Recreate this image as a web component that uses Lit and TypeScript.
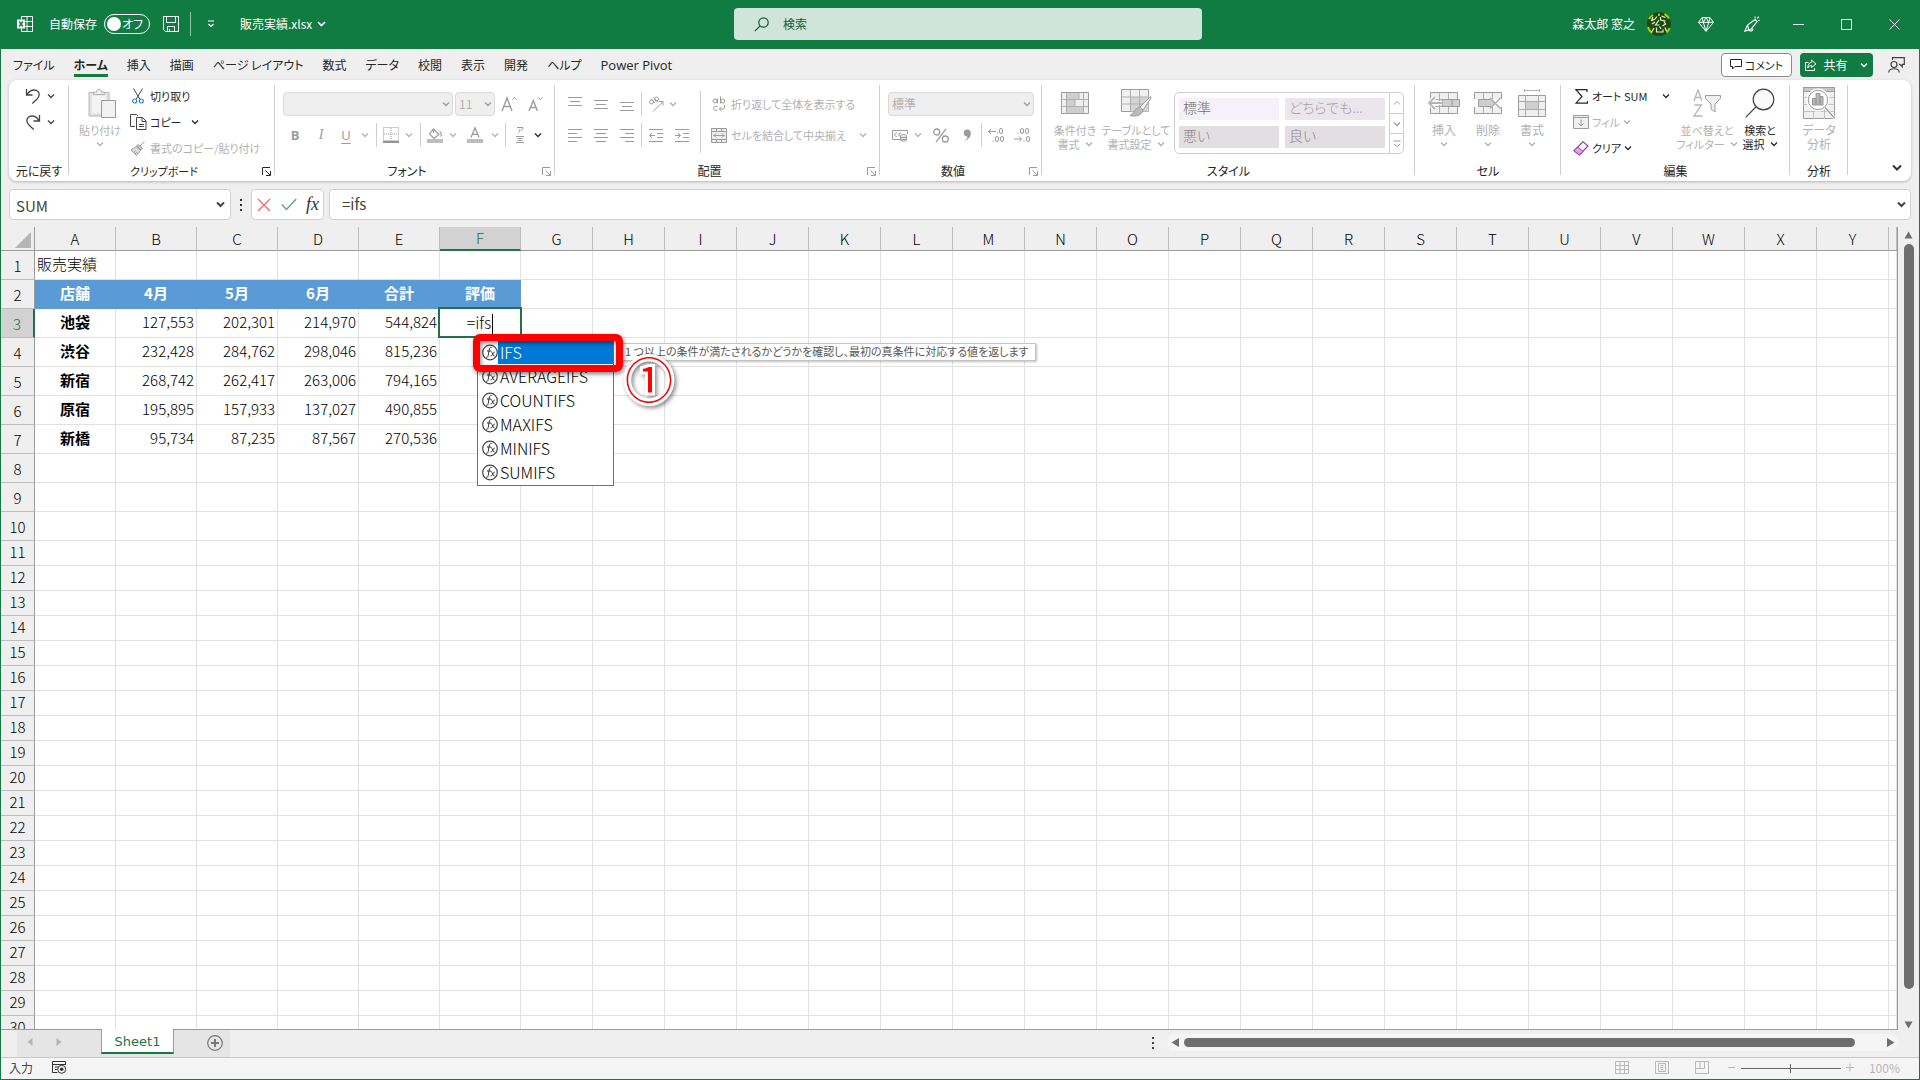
import { LitElement, html, css, svg, nothing } from "lit";
import { customElement } from "lit/decorators.js";
import { classMap } from "lit/directives/class-map.js";

const icon = (w: number, h: number, body: unknown, cls = "") => html`<svg
  class="ico ${cls}" width=${w} height=${h} viewBox="0 0 ${w} ${h}" fill="none" stroke="currentColor"
  aria-hidden="true">${body}</svg>`;

const chev = (cls = "") => icon(8, 6, svg`<path d="M1 1.5 4 4.5 7 1.5" stroke-width="1.3"/>`, "chev " + cls);
const bigChev = () => icon(10, 7, svg`<path d="M1 1.5 5 5.5 9 1.5" stroke-width="2"/>`);

const hlines = (rows: [number, number, number][]) =>
  icon(14, 14, rows.map(([x, y, w]) => svg`<path d="M${x} ${y}.5h${w}" />`));

/* ---- title bar ---- */
const excelIcon = icon(16, 16, svg`
  <path d="M4.500 3.500v-3h11v15h-11v-3M10 .5v15M4.500 5.500h11M4.500 10.500h11"/>
  <path d="M0 3.500h8v9H0z" fill="#fff" stroke="none"/><path d="M2.200 5.500l3.600 5M5.800 5.500l-3.600 5" stroke="#107c41" stroke-width="1.400"/>`);
const saveIcon = icon(16, 16, svg`<path d="M.5.5h15v15h-13l-2-2zM3.500.5v6h9v-6M4.500 15.500v-5h7v5M6.500 13v2.500"/>`);
const searchIcon = icon(15, 15, svg`<circle cx="9.500" cy="5.500" r="4.700" stroke-width="1.200"/><path d="M6.200 8.800.8 14.200" stroke-width="1.200"/>`);
const diamondIcon = icon(16, 15, svg`<path d="M4 .7h8l3.500 4.600L8 14.300.5 5.300zM.5 5.300h15M4 .7l1.300 4.600L8 14.300l2.700-9L12 .7M5.300 5.300 8 .7l2.700 4.600"/>`);
const penIcon = icon(16, 16, svg`<path d="M11 3.500 3.500 9 .8 15.200 7 13.200 13.200 5.600zM3.500 9l1.300 5M4 14.300c3 1.500 5 .5 5-1.500M11.300 2.300 11 .5M13.300 2.500 14.800.6M14 4.500l1.800-.3" stroke-width="1.100"/>`);
const avatarIcon = icon(24, 24, svg`
  <circle cx="12" cy="12" r="12" fill="#1d4a14" stroke="none"/>
  <path d="M2 7a11.500 11.500 0 0 1 4-4M17.500 2a11.500 11.500 0 0 1 4.500 4.500M1 15a11.500 11.500 0 0 0 4 6M19.500 20.500a11.500 11.500 0 0 0 3-4.500" stroke="#a4d20c" stroke-width="2"/>
  <path d="M12 1.500v2.500M4.500 8.500l1.500-3.500M10 4.500 8 7 4 9M13.500 5v3l5 1M12 8 8.500 13h4M14.500 4l4 1.500M16 8l2.500 4-3 2M7 16l-2.500 4M9.500 15.500v4.500h6.500v-2.500M12.500 14.500l1.500 2.500M18 15.500l1.500 3.500M5 12l3-2" stroke="#e4f5c4" stroke-width="1.200"/>`);

/* ---- ribbon ---- */
const undoIcon = icon(16, 16, svg`<path d="M1.500 1v6h6M1.800 6.700C4 3.500 6.500 2 9 2c3.500 0 5.200 2.300 5.200 4.600 0 2-1 3.200-2.400 4.600L7.300 15.500" stroke-width="1.300"/>`);
const redoIcon = icon(16, 16, svg`<path d="M14.500 1v6h-6M14.200 6.700C12 3.500 9.500 2 7 2 3.500 2 1.800 4.300 1.800 6.600c0 2 1 3.200 2.400 4.600l4.500 4.300" stroke-width="1.300"/>`);
const pasteIcon = icon(32, 31, svg`<g transform="translate(4 0)">
  <path d="M1 4.500h20V28H1z" fill="#e3e3e3" stroke="#b5b5b5"/><path d="M4 7.500h14V25H4z" fill="#f4f4f4" stroke="none"/>
  <path d="M5.500 6.500V4.200h3c.3-4 4.700-4 5 0h3v2.300z" fill="#f0f0f0" stroke="#b0b0b0"/>
  <path d="M13.500 12.500h14v17h-14z" fill="#f2f2f2" stroke="#9a9a9a"/></g>`);
const cutIcon = icon(12, 16, svg`<path d="M1.500.5 8 11.500M10.500.5 4 11.500" stroke="#444"/><circle cx="2.700" cy="13" r="2" stroke="#2b88d8" stroke-width="1.200"/><circle cx="9.300" cy="13" r="2" stroke="#2b88d8" stroke-width="1.200"/>`);
const copyIcon = icon(17, 16, svg`<path d="M5 12.500H.5V.5h6l1.500 1.500M6.500 3.500h6l3.500 3.500v8.500H6.500zM12 3.700v3.800h4M9 10.500h5M9 12.500h5" stroke="#444"/>`);
const painterIcon = icon(16, 15, svg`<path d="M14.500.7 9.500 5.500M8 3.500l4.500 4L11 9 6.500 5z" fill="#c9c9c9"/><path d="M6 5.500 1 9l5.500 5.500L10.500 9.500zM3.500 11.500l2-1.500M5 13l2-2" fill="#dedede"/>`);
const launcher = (cls = "") => icon(9, 9, svg`<path d="M.5 8V.5H8M3.500 3.500l4.500 4.500M8.500 4v4.500H4"/>`, cls);
const growIcon = icon(16, 16, svg`<path d="M1 15 6 2l5 13M2.800 10.500h6.400" stroke-width="1.400"/><path d="M11.500 3.500 13.500 1.500l2 2"/>`);
const shrinkIcon = icon(16, 16, svg`<path d="M1 15 5.300 4.500 9.500 15M2.500 11.500h5.600" stroke-width="1.400"/><path d="M10.500 1.500l2 2 2-2"/>`);
const borderIcon = icon(16, 16, svg`<path d="M.5.5h15v13H.5zM8 1v12M1 7h14" stroke-dasharray="1 1"/><path d="M0 15h16" stroke="#666" stroke-width="1.400"/>`);
const fillColorIcon = icon(16, 16, svg`<path d="M6.500 2 12 7.500 7 11.500 2.500 7zM6.500 2v4M12.500 4.500c1.500.5 2 2 1.500 5" stroke-width="1.200"/><path d="M0 12h16v4H0z" fill="#bdbdbd" stroke="none"/>`);
const fontColorIcon = icon(16, 16, svg`<path d="M4 10.500 8 .8l4 9.700M5.300 7.300h5.400" stroke-width="1.300"/><path d="M0 12h16v4H0z" fill="#bdbdbd" stroke="none"/>`);
const rubyIcon = icon(8, 16, svg`<path d="M1 .5h6c0 1.700-.7 2.300-2 2.800M3.800 2c0 2-.3 3-1.500 3.800M0 9.500h8M1.500 11.500h5M1.500 13.500h5M0 15.500h8"/>`);
const orientIcon = icon(16, 16, svg`<circle cx="3.500" cy="6" r="2"/><path d="M3 2.500 7 7M5.500 1.500l4 4.500"/><circle cx="8.500" cy="3" r="2"/><path d="M5 15.500 14.500 6M11 5.500h4v4"/>`);
const wrapIcon = icon(14, 16, svg`<circle cx="3" cy="5" r="2"/><path d="M5.500 2.500v5M8.500.5v7"/><circle cx="10.800" cy="5" r="2"/><path d="M5.500 10.800c-2-1.300-4-.3-4 1.500s2 2.700 4 1.500M12.500 9v2.500c0 1-.5 1.500-1.500 1.500H7.500M9.500 10.800 7.300 13l2.200 2.200"/>`);
const mergeIcon = icon(16, 15, svg`<path d="M.5.5h15v14H.5zM.5 3.500h15M.5 11.500h15M5.500.5v3M10.500.5v3M5.500 11.500v3M10.500 11.500v3" fill="#ededed"/><path d="M2.500 7.500h11M5 5.500l-2 2 2 2M11 5.500l2 2-2 2"/>`);
const moneyIcon = icon(16, 13, svg`<path d="M8 10.500H.5v-9h15V5M5 4c-3-1-3 4 0 3.500M7 7.500V4.500l2-.5"/><path d="M8.500 6.500c0-1.300 6-1.300 6 0v4.500c0 1.500-6 1.500-6 0zM8.500 8.500h6M8.500 10.500h6" fill="#e6e6e6"/>`);
const percentIcon = icon(16, 15, svg`<circle cx="3.700" cy="4" r="3" stroke-width="1.300"/><circle cx="12.300" cy="11" r="3" stroke-width="1.300"/><path d="M13 .8 3 14.200" stroke-width="1.300"/>`);
const commaIcon = icon(9, 13, svg`<path d="M4.300.5c5.500 0 4.700 9-2.800 12 2-2 3-3.500 2.800-5C-.5 7.500-.5.5 4.300.5z" fill="currentColor" stroke="none"/>`);
const zeros = (xs: [number, number][]) => xs.map(([x, y]) => svg`<rect x=${x} y=${y} width="3" height="5" rx="1.500"/>`);
const dots = (xs: [number, number][]) => xs.map(([x, y]) => svg`<path d="M${x} ${y}h1.200" stroke-width="1.200"/>`);
const incDecIcon = icon(16, 16, [svg`<path d="M.5 4.500h7.500M3 2 .5 4.500 3 7"/>`, zeros([[11.5, 1.5], [7.5, 9.5], [12.5, 9.5]]), dots([[9, 6], [4.5, 14]])]);
const decDecIcon = icon(16, 16, [svg`<path d="M0 12h7.500M5 9.500 7.500 12 5 14.500"/>`, zeros([[6.5, 1.5], [11.5, 1.5], [12.500, 9.5]]), dots([[3.5, 6], [9.5, 14]])]);
const condIcon = icon(28, 22, svg`<path d="M.5.5h27v21H.5z" fill="#f0f0f0"/><path d="M6 1h12v6.500H6zM6 7.500h8v7H6zM6 14.500h17V21H6z" fill="#cfcfcf" stroke="none"/><path d="M.5 7.500h27M.5 14.500h27M5.500.5v21M22.500.5v21M18 .5v7M14 7.500v7" stroke="#b0b0b0"/>`);
const tableFmtIcon = icon(32, 28, svg`<path d="M1.500.5h27v22h-27z" fill="#f0f0f0"/><path d="M10.500 8h18v14.500h-18z" fill="#d4d4d4" stroke="none"/><path d="M1.500 8h27M1.500 15h27M10.500.5v22M19.500.5v22" stroke="#b0b0b0"/>
  <path d="M30.500 7.500 20 18l3 3L31 9z" fill="#f4f4f4"/><path d="M20 18c-4 0-5 5-10 8.500 6 1.500 12 0 13-5.500z" fill="#bcbcbc"/>`);
const cellGrid = svg`<path d="M2.500.5h27v21h-27z" fill="#f0f0f0"/><path d="M2.500 7.500h27M2.500 14.500h27M11.500.5v21M20.500.5v21" stroke="#b0b0b0"/>`;
const insertIcon = icon(32, 22, [cellGrid, svg`<path d="M14 7.500h17.500v7H14zM24 7.500v7" fill="#cfcfcf"/><path d="M1 11h13M7 5l-6 6 6 6" stroke="#fff" stroke-width="4"/><path d="M1 11h14M7 5l-6 6 6 6" stroke="#b5b5b5" stroke-width="1.800"/>`]);
const deleteIcon = icon(32, 22, [cellGrid, svg`<path d="M0 7h32v8H0z" fill="#fff" stroke="none"/><path d="M6.500 7.500h13l3.500 3.500-3.500 3.500h-13z" fill="#cfcfcf"/><path d="m18 6 10.500 10.500M28.500 6 18 16.500" stroke="#b0b0b0" stroke-width="1.500"/>`]);
const formatIcon = icon(28, 28, svg`<path d="M6.500 1.500h15M6.500 0v3M21.500 0v3" stroke="#b0b0b0"/><path d="M.5 6.500h27v21H.5z" fill="#f0f0f0"/><path d="M.5 12.500h27M.5 20.500h27M7.500 6.500v21M20.500 6.500v21" stroke="#aaa"/><path d="M8 13h12v7H8z" fill="#cfcfcf" stroke="none"/>`);
const sigmaIcon = icon(13, 15, svg`<path d="M12 3V.7H1L7 7.500 1 14.200h11.500V12" stroke-width="1.200"/>`);
const fillIcon = icon(16, 14, svg`<path d="M.5.5h15v13H.500z" fill="#f0f0f0"/><path d="M.5 2.500h15M8 4.500v6M5.500 8.500 8 11l2.500-2.500"/>`);
const eraserIcon = icon(16, 15, svg`<path d="M10 .8 15 5 6.500 14 1 9.800z" stroke="#9b3fa8" fill="#fff" stroke-width="1.200"/><path d="M4.800 6 10 10.300 6.500 14 1 9.800z" fill="#d9a8e0" stroke="#9b3fa8"/>`);
const sortIcon = icon(28, 28, svg`<path d="M1 12 5 1l4 11M2.500 8.500h5M1.500 16h7L1 27h8.500" stroke="#b5b5b5" stroke-width="1.300"/><path d="M12.500 6.500h15v3L22 15v8l-4-3v-5l-5.500-5.500z" fill="#f0f0f0"/>`);
const findIcon = icon(30, 30, svg`<circle cx="18.500" cy="11.500" r="10.300" fill="#fafafa" stroke-width="1.200"/><path d="M10.800 19 .7 29.300" stroke-width="1.200"/>`);
const analyzeIcon = icon(32, 32, svg`<path d="M.5.5h31v31H.5z" fill="#f0f0f0"/><path d="M.5.500h31v4H.5z" fill="#c6c6c6"/><path d="M.5 10.500h31M.5 17.500h31M.5 24.500h31M10.500 4v28M21.500 4v28" stroke="#c0c0c0"/>
  <circle cx="15" cy="13" r="10.500" fill="#fff" stroke="#fff" stroke-width="2"/><circle cx="15" cy="13" r="9.700" fill="#fff" stroke="#999"/><path d="M22 20.500 31.500 31" stroke="#fff" stroke-width="3"/><path d="M22 20.500 31.500 31" stroke="#999" stroke-width="1.300"/>
  <path d="M9.500 11.500h3.500V18H9.500zM13 6.500h4V18h-4zM17 9.500h3V18h-3z" fill="#b5b5b5" stroke="#999"/>`);

const commentIcon = icon(12, 11, svg`<path d="M.5.5h11v7H5L2.500 10V7.500h-2z"/>`);
const shareIcon = icon(12, 12, svg`<path d="M3.500 3.500h-3v8h9V9M6.500 1l4.500 4-4.500 3.500V6.500C4.500 6.500 3.500 7.500 2.800 9c0-3 1.200-5.500 3.700-5.700z"/>`);
const feedbackIcon = icon(17, 16, svg`<circle cx="6" cy="7.500" r="3" stroke-width="1.200"/><path d="M.7 15.500c.3-5 10.300-5 10.600 0M4.500 3V.6h11.800v6.800h-2v2.300l-2.300-2.300h-1" stroke-width="1.200"/>`);

const tabs = ["ファイル", "ホーム", "挿入", "描画", "ページ レイアウト", "数式", "データ", "校閲", "表示", "開発", "ヘルプ", "Power Pivot"];

const letters = "ABCDEFGHIJKLMNOPQRSTUVWXY".split("");
const sheet: string[][] = [
  ["販売実績"],
  ["店舗", "4月", "5月", "6月", "合計", "評価"],
  ["池袋", "127,553", "202,301", "214,970", "544,824"],
  ["渋谷", "232,428", "284,762", "298,046", "815,236"],
  ["新宿", "268,742", "262,417", "263,006", "794,165"],
  ["原宿", "195,895", "157,933", "137,027", "490,855"],
  ["新橋", "95,734", "87,235", "87,567", "270,536"],
];
const functions = ["IFS", "AVERAGEIFS", "COUNTIFS", "MAXIFS", "MINIFS", "SUMIFS"];

const base = css`
  *, *::before, *::after { box-sizing: border-box; }
  button, input, select {
    font: inherit; color: inherit; background: none; border: 0; padding: 0; margin: 0;
    font-feature-settings: inherit; border-radius: 0; outline: none;
  }
  button { display: flex; align-items: center; justify-content: center; white-space: nowrap; }
  .ico { display: block; flex: none; }
`;

@customElement("title-bar")
export class TitleBar extends LitElement {
  static styles = [base, css`
    :host { display: block; background: #107c41; color: #fff; }
    .bar { height: 49px; display: grid; grid-template-columns: 1fr 468px 1fr; align-items: center; padding: 0 0 1px 16px; }
    .left, .right { display: flex; align-items: center; white-space: nowrap; }
    .label { margin: 0 7px 0 16px; }
    .switch { width: 46px; height: 20px; border: 1px solid #fff; border-radius: 10px; justify-content: space-between; padding: 0 6px 0 2px; margin-right: 13px; }
    .knob { width: 14px; height: 14px; border-radius: 50%; background: #fff; }
    .rule { width: 1px; height: 24px; background: #8fc3a7; margin: 0 16px 0 11px; }
    .file { margin-left: 25px; gap: 5px; }
    .search { display: flex; align-items: center; gap: 14px; height: 32px; padding-left: 20px; border-radius: 4px; background: #cfe5d9; color: #17593a; }
    .search input { flex: 1; }
    .search input::placeholder { color: #17593a; opacity: 1; }
    .right { justify-content: flex-end; padding-right: 19px; }
    .user { margin-right: 27px; gap: 12px; }
    .gem { margin-right: 30px; }
    .pen { margin-right: 33px; }
    .win { width: 11px; }
    .wins { display: flex; gap: 37px; }
  `];
  render() {
    return html`<header class="bar">
      <div class="left">
        ${excelIcon}<span class="label">自動保存</span>
        <button class="switch" role="switch" aria-checked="false" aria-label="自動保存"><span class="knob"></span>オフ</button>
        <button aria-label="上書き保存">${saveIcon}</button>
        <span class="rule"></span>
        <button aria-label="クイック アクセス">${icon(8, 8, svg`<path d="M1 1h6M1.500 4 4 6.500 6.500 4" stroke-width="1.200"/>`)}</button>
        <button class="file">販売実績.xlsx ${icon(9, 6, svg`<path d="M1 1 4.500 4.500 8 1" stroke-width="1.600"/>`)}</button>
      </div>
      <label class="search">${searchIcon}<input type="search" placeholder="検索" aria-label="検索" /></label>
      <div class="right">
        <button class="user">森太郎 窓之 ${avatarIcon}</button>
        <button class="gem" aria-label="Premium">${diamondIcon}</button>
        <button class="pen" aria-label="新機能">${penIcon}</button>
        <div class="wins">
          <button class="win" aria-label="最小化">${icon(11, 11, svg`<path d="M0 5.500h11"/>`)}</button>
          <button class="win" aria-label="最大化">${icon(11, 11, svg`<path d="M.5.5h10v10H.500z"/>`)}</button>
          <button class="win" aria-label="閉じる">${icon(11, 11, svg`<path d="m.5.5 10 10m0-10-10 10"/>`)}</button>
        </div>
      </div>
    </header>`;
  }
}

@customElement("menu-tabs")
export class MenuTabs extends LitElement {
  static styles = [base, css`
    :host { display: block; }
    .row { height: 31px; display: flex; align-items: center; padding: 0 14px 0 12px; color: #262626; }
    .tabs { display: flex; gap: 19px; flex: 1; }
    .tab { height: 25px; color: inherit; text-decoration: none; line-height: 26px; white-space: nowrap; border-bottom: 3px solid transparent; }
    .tab:lang(en) { font-family: "Open Sans", sans-serif; font-size: 13px; }
    .active { font-weight: 700; border-bottom-color: #107c41; }
    .actions { display: flex; align-items: center; gap: 8px; }
    .comment, .share { height: 24px; border-radius: 4px; }
    .comment { width: 71px; border: 1px solid #8a8a8a; background: #fff; gap: 3px; font-size: 11px; }
    .share { width: 73px; background: #107c41; color: #fff; gap: 6px; }
    .share .chev { margin-left: 6px; }
    .fb { margin-left: 7px; color: #444; }
  `];
  render() {
    return html`<div class="row">
      <nav class="tabs">${tabs.map((t) => html`<a href="#" lang=${/^[A-Z]/.test(t) ? "en" : "ja"} class=${classMap({ tab: true, active: t === "ホーム" })}>${t}</a>`)}</nav>
      <div class="actions">
        <button class="comment">${commentIcon}コメント</button>
        <button class="share">${shareIcon}共有${chev()}</button>
        <button class="fb" aria-label="フィードバック">${feedbackIcon}</button>
      </div>
    </div>`;
  }
}

@customElement("ribbon-bar")
export class RibbonBar extends LitElement {
  static styles = [base, css`
    :host { display: block; padding: 0 8px; }
    .ribbon { display: flex; height: 101px; background: #fff; border-radius: 8px; box-shadow: 0 1px 3px rgba(0, 0, 0, 0.25); color: #262626; font-size: 11px; }
    .group { display: flex; flex-direction: column; flex: none; background: linear-gradient(#cfcfcf, #cfcfcf) right 5px / 1px 90px no-repeat; }
    .g-undo { width: 60px; } .g-clip { width: 206px; } .g-font { width: 280px; } .g-align { width: 325px; }
    .g-num { width: 162px; } .g-style { width: 373px; } .g-cell { width: 146px; } .g-edit { width: 229px; } .g-ana { width: 58px; }
    .body { display: flex; height: 82px; }
    .foot { display: flex; align-items: center; height: 17px; text-align: center; white-space: nowrap; }
    .name { flex: 1; }
    .launch { width: 16px; justify-content: flex-start; padding-left: 3px; padding-top: 2px; }
    .off { color: #b1b1b1; }
    .off .ico { color: #9c9c9c; }
    .off .chev { color: #b1b1b1; }
    .list { display: grid; grid-auto-rows: 26px; padding-top: 3px; align-items: center; justify-items: start; }
    .g-undo .list { padding-left: 16px; }
    .g-undo button { gap: 6px; color: #444; }
    .g-clip .list { padding-left: 4px; }
    .item { gap: 3px; }
    .pic { width: 18px; display: grid; justify-content: center; }
    .item .chev { margin-left: 2px; }
    .item .far { margin-left: 6px; }
    .big { flex-direction: column; justify-content: flex-start; padding-top: 7px; line-height: 14px; flex: none; }
    .art { height: 32px; display: grid; place-items: center; margin-bottom: 4px; }
    .line { display: flex; align-items: center; gap: 5px; height: 14px; }
    .w50 { width: 50px; } .w72 { width: 72px; } .w44 { width: 44px; } .w58 { width: 58px; } .w60 { width: 60px; } .w46 { width: 46px; }
    .g-clip .body { padding-left: 6px; }
    .g-cell, .g-ana, .foot { font-size: 12px; }
    .g-clip .foot { font-size: 11px; }
    .rows { display: grid; grid-template-rows: 24px 24px; row-gap: 7px; padding-top: 12px; align-content: start; }
    .tools { display: grid; align-items: center; justify-items: center; }
    .rule { width: 1px; height: 24px; background: #cfcfcf; }
    .combo { display: grid; align-items: center; height: 24px; border: 1px solid #dadada; border-radius: 4px; background: #efefef; color: #b1b1b1; font-size: 12px; }
    .combo select { grid-area: 1 / 1; appearance: none; width: 100%; height: 22px; padding-left: 3px; opacity: 1; }
    .combo .chev { grid-area: 1 / 1; justify-self: end; margin-right: 2px; color: #9c9c9c; }
    .g-font .body { padding-left: 8px; }
    .f1 { grid-template-columns: 170px 2px 40px 28px 26px; }
    .f1 .combo { width: 100%; }
    .f2 { grid-template-columns: 24px 28px 22px 16px 6px 24px 12px 10px 20px 16px 28px 11px 10px 20px 16px; }
    .b { font-weight: 700; font-size: 13px; font-family: "Open Sans", sans-serif; }
    .i { font-style: italic; font-size: 14px; font-family: "Liberation Serif", serif; }
    .u { text-decoration: underline; text-underline-offset: 3px; font-size: 13px; font-family: "Open Sans", sans-serif; }
    .b, .i, .u { color: #9c9c9c; }
    .f2 .dark { color: #262626; }
    .g-align .body { padding-left: 7px; }
    .a { grid-template-columns: 26px 26px 26px 3px 26px 26px; }
    .a .start { justify-self: start; }
    .tall { width: 1px; height: 62px; background: #cfcfcf; margin: 11px 9px 0 5px; }
    .wrapcol { justify-items: start; }
    .wrapcol button { height: 24px; }
    .wrapcol .far { margin-left: 10px; }
    .g-num .body { padding-left: 8px; }
    .g-num .combo { width: 146px; }
    .n2 { grid-template-columns: 24px 12px 34px 18px 10px 20px 32px; }
    .g-style .body { padding-left: 8px; }
    .gallery { display: grid; grid-template-columns: 1fr 15px; width: 230px; height: 62px; margin: 12px 0 0 2px; border: 1px solid #cfcfcf; border-radius: 5px; overflow: hidden; }
    .tiles { display: grid; grid-template-columns: 100px 100px; grid-template-rows: 22px 22px; gap: 6px; padding: 5px 4px; }
    .tile { justify-content: flex-start; padding: 0 0 5px 4px; font-size: 14px; font-weight: 300; }
    .t0 { background: #f6f1f8; color: #6e6e6e; } .t1 { background: #ebe5ec; color: #a5a0a5; }
    .t2 { background: #e3dee2; color: #8a8488; } .t3 { background: #e3dee2; color: #8a8488; }
    .spin { display: grid; grid-template-rows: 1fr 1fr 1fr; border-left: 1px solid #cfcfcf; color: #9c9c9c; }
    .spin button + button { border-top: 1px solid #cfcfcf; }
    .g-cell .body { padding-left: 7px; }
    .g-edit .body { padding-left: 10px; }
    .g-edit .list { width: 106px; }
    .g-edit .item { gap: 1px; }
    .g-edit .pic { width: 20px; }
    .g-edit .item .far { margin-left: 14px; }
    .find .ico { color: #444; }
    .find .chev { color: #262626; }
    .rest { flex: 1; display: flex; justify-content: flex-end; align-items: flex-end; padding: 0 9px 10px 0; color: #333; }
  `];

  private group(cls: string, name: string, body: unknown, launch?: "on" | "off") {
    return html`<section class="group ${cls}" aria-label=${name}>
      <div class="body">${body}</div>
      <div class="foot"><span class="name">${name}</span>${launch
        ? html`<button class=${classMap({ launch: true, off: launch === "off" })} aria-label=${name + "の設定"}>${launcher()}</button>` : nothing}</div>
    </section>`;
  }
  private big(w: string, art: unknown, lines: string[], drop: "own" | "inline" | "none" = "own", cls = "off") {
    return html`<button class="big ${w} ${cls}"><span class="art">${art}</span>
      ${lines.map((l, i) => html`<span class="line">${l}${drop === "inline" && i === lines.length - 1 ? chev() : nothing}</span>`)}
      ${drop === "own" ? html`<span class="line">${chev()}</span>` : nothing}</button>`;
  }
  private item(art: unknown, text: string, drop: unknown = nothing, cls = "") {
    return html`<button class="item ${cls}"><span class="pic">${art}</span>${text}${drop}</button>`;
  }
  private tool(label: string, art: unknown) {
    return html`<button aria-label=${label}>${art}</button>`;
  }

  render() {
    const t = this.tool;
    const rule = html`<span class="rule"></span>`;
    return html`<div class="ribbon">
      ${this.group("g-undo", "元に戻す", html`<div class="list">
        <button aria-label="元に戻す">${undoIcon}${chev()}</button><button aria-label="やり直し">${redoIcon}${chev()}</button></div>`)}
      ${this.group("g-clip", "クリップボード", html`${this.big("w50", pasteIcon, ["貼り付け"])}
        <div class="list">${this.item(cutIcon, "切り取り")}${this.item(copyIcon, "コピー", chev("far"))}${this.item(painterIcon, "書式のコピー/貼り付け", nothing, "off")}</div>`, "on")}
      ${this.group("g-font", "フォント", html`<div class="rows off">
        <div class="tools f1">
          <span class="combo"><select disabled aria-label="フォント名"><option></option></select>${chev()}</span><span></span>
          <span class="combo"><select disabled aria-label="フォント サイズ"><option>11</option></select>${chev()}</span>
          ${t("拡大", growIcon)}${t("縮小", shrinkIcon)}
        </div>
        <div class="tools f2">
          <button class="b">B</button><button class="i">I</button><button class="u">U</button>${t("下線", chev())}${rule}
          ${t("罫線", borderIcon)}${t("罫線の種類", chev())}${rule}
          ${t("塗りつぶし", fillColorIcon)}${t("塗りつぶしの色", chev())}
          ${t("文字色", fontColorIcon)}${t("フォントの色", chev())}${rule}
          ${t("ふりがな", rubyIcon)}${t("ふりがなの設定", chev("dark"))}
        </div></div>`, "off")}
      ${this.group("g-align", "配置", html`<div class="rows off">
        <div class="tools a">
          ${t("上揃え", hlines([[0, 0, 14], [2, 4, 10], [0, 8, 14]]))}${t("上下中央揃え", hlines([[0, 3, 14], [2, 7, 10], [0, 11, 14]]))}${t("下揃え", hlines([[0, 5, 14], [2, 9, 10], [0, 13, 14]]))}
          ${rule}${t("方向", orientIcon)}<button class="start" aria-label="方向の種類">${chev()}</button>
        </div>
        <div class="tools a">
          ${t("左揃え", hlines([[0, 1, 14], [0, 5, 9], [0, 9, 14], [0, 13, 9]]))}${t("中央揃え", hlines([[0, 1, 14], [2, 5, 10], [0, 9, 14], [2, 13, 10]]))}${t("右揃え", hlines([[0, 1, 14], [5, 5, 9], [0, 9, 14], [5, 13, 9]]))}
          ${rule}${t("インデントを減らす", icon(14, 14, svg`<path d="M0 1.500h14M8 5.500h6M8 9.500h6M0 13.500h14M.5 7.500h5.500M3 5 .5 7.500 3 10"/>`))}
          ${t("インデントを増やす", icon(14, 14, svg`<path d="M0 1.500h14M8 5.500h6M8 9.500h6M0 13.500h14M0 7.500h5.500M3 5l2.500 2.500L3 10"/>`))}
        </div></div>
        <span class="tall"></span>
        <div class="rows wrapcol">${this.item(wrapIcon, "折り返して全体を表示する", nothing, "off")}${this.item(mergeIcon, "セルを結合して中央揃え", chev("far"), "off")}</div>`, "off")}
      ${this.group("g-num", "数値", html`<div class="rows off">
        <span class="combo"><select disabled aria-label="表示形式"><option>標準</option></select>${chev()}</span>
        <div class="tools n2">${t("通貨", moneyIcon)}${t("通貨の種類", chev())}${t("パーセント", percentIcon)}${t("桁区切り", commaIcon)}${rule}${t("小数点以下を増やす", incDecIcon)}${t("小数点以下を減らす", decDecIcon)}</div></div>`, "off")}
      ${this.group("g-style", "スタイル", html`
        ${this.big("w50", condIcon, ["条件付き", "書式"], "inline")}${this.big("w72", tableFmtIcon, ["テーブルとして", "書式設定"], "inline")}
        <div class="gallery"><div class="tiles">${["標準", "どちらでも...", "悪い", "良い"].map((s, i) => html`<button class="tile t${i}">${s}</button>`)}</div>
          <div class="spin"><button aria-label="前へ">${icon(8, 6, svg`<path d="M1 4.500 4 1.500l3 3"/>`)}</button><button aria-label="次へ">${chev()}</button><button aria-label="その他">${icon(8, 8, svg`<path d="M.5 1h7M1 4l3 2.500L7 4"/>`)}</button></div></div>`)}
      ${this.group("g-cell", "セル", html`${this.big("w44", insertIcon, ["挿入"])}${this.big("w44", deleteIcon, ["削除"])}${this.big("w44", formatIcon, ["書式"])}`)}
      ${this.group("g-edit", "編集", html`<div class="list">
          ${this.item(sigmaIcon, "オート SUM", chev("far"))}${this.item(fillIcon, "フィル", chev(), "off")}${this.item(eraserIcon, "クリア", chev())}</div>
        ${this.big("w60", sortIcon, ["並べ替えと", "フィルター"], "inline")}${this.big("w46", findIcon, ["検索と", "選択"], "inline", "find")}`)}
      ${this.group("g-ana", "分析", this.big("w58", analyzeIcon, ["データ", "分析"], "none"))}
      <div class="rest"><button aria-label="リボンを折りたたむ">${bigChev()}</button></div>
    </div>`;
  }
}

@customElement("formula-bar")
export class FormulaBar extends LitElement {
  static styles = [base, css`
    :host { display: block; padding: 8px 8px 7px; }
    .row { display: flex; height: 31px; color: #444; }
    .box { display: flex; align-items: center; background: #fff; border: 1px solid #d0d0d0; border-radius: 4px; }
    .name { width: 222px; padding: 0 5px 0 6px; }
    .name input { flex: 1; min-width: 0; font-size: 15px; padding-top: 3px; }
    .grip { width: 20px; display: grid; place-items: center; color: #333; }
    .ops { width: 73px; justify-content: space-between; padding: 0 4px 0 5px; margin-right: 5px; }
    .formula { flex: 1; padding: 0 4px 0 12px; }
    .formula input { flex: 1; font-size: 15px; padding-bottom: 2px; }
    .fx { font: italic 18px "Liberation Serif", serif; color: #333; }
  `];
  render() {
    return html`<div class="row">
      <div class="box name"><input aria-label="名前ボックス" value="SUM" />${icon(9, 7, svg`<path d="M1 1.500 4.500 5 8 1.500" stroke-width="2"/>`)}</div>
      <span class="grip">${icon(2, 12, svg`<path d="M1 0v2M1 5v2M1 10v2" stroke-width="2"/>`)}</span>
      <div class="box ops">
        <button aria-label="キャンセル">${icon(14, 14, svg`<path d="m1 1 12 12M13 1 1 13" stroke="#f06a6a" stroke-width="1.400"/>`)}</button>
        <button aria-label="入力">${icon(16, 13, svg`<path d="M.8 6.500 5.500 11.500 15.200 1" stroke="#5aa872" stroke-width="1.400"/>`)}</button>
        <button class="fx" aria-label="関数の挿入">fx</button>
      </div>
      <div class="box formula"><input aria-label="数式バー" value="=ifs" />${icon(9, 7, svg`<path d="M1 1.500 4.500 5 8 1.500" stroke-width="2"/>`)}</div>
    </div>`;
  }
}

@customElement("sheet-grid")
export class SheetGrid extends LitElement {
  static styles = [base, css`
    :host { display: flex; flex: 1; min-height: 0; color: #000; }
    .view { position: relative; flex: 1; min-width: 0; overflow: hidden; background: #fff; border-right: 1px solid #9b9b9b; border-bottom: 1px solid #9b9b9b; }
    table { border-collapse: separate; border-spacing: 0; table-layout: fixed; width: 100%; font-size: 15px; }
    .c-head { width: 34px; } .c-data { width: 81px; } .c-std { width: 72px; }
    th, td { padding: 0; font-weight: 300; white-space: nowrap; overflow: hidden; border-right: 1px solid #e1e1e1; border-bottom: 1px solid #e1e1e1; }
    thead th { height: 24px; line-height: 22px; background: #efefef; border-right-color: #bdbdbd; border-bottom: 1px solid #9b9b9b; }
    thead .on { background: #d2d2d2; color: #217346; border-bottom: 2px solid #217346; }
    .corner { border-right-color: #9b9b9b; }
    .corner svg { margin: 2px 3px 0 auto; }
    tbody th { background: #efefef; border-right-color: #9b9b9b; border-bottom-color: #bdbdbd; text-align: center; }
    tbody .on { background: #d2d2d2; color: #217346; border-right: 2px solid #217346; }
    .tall th, .tall td { height: 29px; line-height: 26px; }
    .tall td { padding-bottom: 2px; }
    .tall th { padding-top: 2px; }
    .std th, .std td { height: 25px; line-height: 22px; padding-bottom: 2px; }
    .num { text-align: right; padding-right: 2px; }
    .mid { text-align: center; font-weight: 700; }
    .title { padding-left: 2px; }
    .blue { background: #5b9bd5; color: #fff; border-color: #5b9bd5; }
    .edit { position: relative; overflow: visible; text-align: center; }
    .frame { position: absolute; inset: -2px -2px -1px -2px; border: 2px solid #217346; background: #fff; line-height: 26px; font-size: 16px; }
    .caret { display: inline-block; width: 1px; height: 22px; background: #000; vertical-align: middle; margin-left: 1px; }
    .menu { position: absolute; left: 476px; top: 112px; width: 137px; margin: 0; padding: 0 0 1px; list-style: none; border: 1px solid #707070; background: #fff; font-size: 16px; font-weight: 300; }
    .fn { display: flex; width: 100%; height: 24px; padding-left: 4px; justify-content: flex-start; }
    .fn .text { flex: 1; text-align: left; line-height: 24px; padding-left: 2px; }
    .sel .text { background: #0078d7; color: #fff; }
    .tip { position: absolute; left: 620px; top: 116px; padding: 0 6px 0 3px; height: 18px; line-height: 14px; border: 1px solid #c4c4c4; background: #fff; box-shadow: 1px 1px 2px rgba(0, 0, 0, 0.25); color: #575757; white-space: nowrap; font-size: 11px; }
    .mark { position: absolute; left: 472px; top: 107px; width: 150px; height: 38px; border: 7px solid #f00; border-radius: 7px; box-shadow: 1px 2px 4px rgba(0, 0, 0, 0.5), inset 1px 2px 4px rgba(0, 0, 0, 0.5); }
    .step { position: absolute; left: 624px; top: 136px; font-size: 48px; line-height: 28px; color: #f00; -webkit-text-stroke: 6px #fff; paint-order: stroke fill; filter: drop-shadow(2px 2px 2px rgba(0, 0, 0, 0.45)); }
    .scroll { width: 21px; display: flex; flex-direction: column; align-items: center; padding: 4px 0 1px; color: #6e6e6e; }
    .track { flex: 1; width: 10px; padding: 5px 0 32px; display: flex; }
    .thumb { flex: 1; border-radius: 5px; background: #6e6e6e; }
  `];

  private cell(r: number, c: number) {
    const v = sheet[r]?.[c];
    if (r === 2 && c === 5) return html`<td class="edit"><div class="frame">=ifs<span class="caret"></span></div></td>`;
    const head = r === 1 && c < 6;
    return html`<td class=${classMap({
      blue: head, mid: head || (c === 0 && r > 1 && !!v), num: r > 1 && c > 0 && !!v, title: r === 0 && c === 0,
    })}>${v ?? nothing}</td>`;
  }

  render() {
    const fxIcon = icon(16, 17, svg`<circle cx="8" cy="8.500" r="7.300" fill="#fff" stroke="#444" stroke-width="1.200"/>
      <path d="M9.500 3.500c-1.700-.5-2 .8-2.300 2.500l-1 5.500c-.3 1.500-1 2.200-2.200 1.700M5 7h4.200" stroke="#333"/><path d="M9 8c1.500-1 1.800 5 3.700 4M12.700 8C11 8 10.500 12.200 8.500 12" stroke="#333"/>`);
    return html`
      <div class="view">
        <table>
          <colgroup><col class="c-head" />${letters.map((_, i) => html`<col class=${i < 6 ? "c-data" : "c-std"} />`)}<col /></colgroup>
          <thead><tr><th class="corner">${icon(16, 16, svg`<path d="M16 0v16H0z" fill="#b5b5b5" stroke="none"/>`)}</th>
            ${letters.map((l) => html`<th scope="col" class=${l === "F" ? "on" : ""}>${l}</th>`)}<th></th></tr></thead>
          <tbody>${Array.from({ length: 30 }, (_, r) => html`<tr class=${r < 10 ? "tall" : "std"}>
            <th scope="row" class=${r === 2 ? "on" : ""}>${r + 1}</th>${letters.map((_, c) => this.cell(r, c))}<td></td></tr>`)}</tbody>
        </table>
        <div class="tip">1 つ以上の条件が満たされるかどうかを確認し、最初の真条件に対応する値を返します</div>
        <ul class="menu">${functions.map((f, i) => html`<li><button class=${classMap({ fn: true, sel: i === 0 })}>${fxIcon}<span class="text">${f}</span></button></li>`)}</ul>
        <div class="mark"></div>
        <div class="step">①</div>
      </div>
      <div class="scroll">
        ${icon(9, 8, svg`<path d="M4.500.5 8.500 7.500H.5z" fill="currentColor" stroke="none"/>`)}
        <div class="track"><div class="thumb"></div></div>
        ${icon(9, 8, svg`<path d="M4.500 7.500 8.500.5H.5z" fill="currentColor" stroke="none"/>`)}
      </div>`;
  }
}

@customElement("sheet-footer")
export class SheetFooter extends LitElement {
  static styles = [base, css`
    :host { display: block; color: #444; }
    .tabs { display: flex; height: 27px; padding: 0 21px 0 16px; justify-content: space-between; }
    .left { display: flex; background: #e5e5e5; width: 213px; }
    .nav { width: 84px; display: flex; align-items: center; gap: 23px; padding: 0 0 3px 10px; color: #b5b5b5; }
    .tab { width: 73px; height: 25px; margin-top: -1px; padding-top: 3px; background: #fff; border: solid #9b9b9b; border-width: 0 1px; border-bottom: 2px solid #107c41; color: #217346; font-family: "DejaVu Sans", sans-serif; font-size: 13px; position: relative; }
    .add { flex: 1; color: #767676; padding: 0 0 1px 25px; }
    .right { display: flex; align-items: center; flex: 0 1 746px; gap: 13px; padding-bottom: 2px; }
    .track { flex: 1; display: flex; align-items: center; height: 17px; border-radius: 8px; background: #f5f5f5; padding: 0 3px 0 4px; color: #6e6e6e; }
    .thumb { flex: 1; height: 9px; border-radius: 5px; background: #6e6e6e; margin: 0 32px 0 5px; }
    .status { display: flex; align-items: center; justify-content: space-between; height: 22px; padding: 0 19px 2px 8px; background: #f5f5f5; border-top: 1px solid #c8c8c8; }
    .mode, .view { display: flex; align-items: center; }
    .mode { gap: 19px; }
    .view { color: #b8b8b8; gap: 26px; }
    .zoom { display: flex; align-items: center; gap: 5px; margin-left: -8px; }
    .zoom output { margin-left: 9px; }
    input { appearance: none; display: block; width: 100px; height: 12px; background: linear-gradient(#666, #666) 0 6px / 100% 1px no-repeat; }
    input::-webkit-slider-thumb { appearance: none; width: 1px; height: 9px; background: #666; margin-top: 1px; }
  `];
  render() {
    return html`
      <div class="tabs">
        <div class="left">
          <div class="nav">
            <button aria-label="前のシート">${icon(6, 8, svg`<path d="M5.500 0v8L.5 4z" fill="currentColor" stroke="none"/>`)}</button>
            <button aria-label="次のシート">${icon(6, 8, svg`<path d="M.5 0v8l5-4z" fill="currentColor" stroke="none"/>`)}</button>
          </div>
          <button class="tab">Sheet1</button>
          <button class="add" aria-label="新しいシート">${icon(16, 16, svg`<circle cx="8" cy="8" r="7.300" stroke-width="1.200"/><path d="M8 4v8M4 8h8" stroke-width="2"/>`)}</button>
        </div>
        <div class="right">
          ${icon(2, 12, svg`<path d="M1 0v2M1 5v2M1 10v2" stroke="#444" stroke-width="2"/>`)}
          <div class="track">
            ${icon(8, 9, svg`<path d="M8 0v9L.5 4.500z" fill="currentColor" stroke="none"/>`)}
            <div class="thumb"></div>
            ${icon(8, 9, svg`<path d="M0 0v9l7.500-4.500z" fill="currentColor" stroke="none"/>`)}
          </div>
        </div>
      </div>
      <footer class="status">
        <div class="mode">入力 ${icon(15, 13, svg`<path d="M5.500 11.500h-5V.5h13V4M.5 3.500h13M3 6h3M3 8.500h2" stroke="#333"/><circle cx="9.700" cy="8.300" r="4" stroke="#333"/><circle cx="9.700" cy="8.300" r="1.800" fill="#333" stroke="none"/>`)}</div>
        <div class="view">
          <button aria-label="標準">${icon(14, 13, svg`<path d="M.5.5h13v12H.500zM5 .5v12M9.500.5v12M.5 4.500h13M.5 8.500h13"/>`)}</button>
          <button aria-label="ページ レイアウト">${icon(14, 13, svg`<path d="M.5.5h13v12H.500zM3.500 2.500h7v8h-7zM5.500 4.500h3M5.500 6.500h3M5.500 8.500h3"/>`)}</button>
          <button aria-label="改ページ プレビュー">${icon(14, 13, svg`<path d="M.5.5h13v12H.500zM5 .5v7M9.500.5v7M.500 7.500h9"/>`)}</button>
          <div class="zoom">
            <button aria-label="縮小">${icon(9, 9, svg`<path d="M1 4.500h7"/>`)}</button>
            <input type="range" aria-label="ズーム" min="0" max="100" value="50" />
            <button aria-label="拡大">${icon(9, 9, svg`<path d="M0 4.500h8M4 .5v8"/>`)}</button>
            <output>100%</output>
          </div>
        </div>
      </footer>`;
  }
}

@customElement("app-root")
export class AppRoot extends LitElement {
  static styles = css`
    :host { display: block; }
    .window {
      display: flex; flex-direction: column; height: 100vh; box-sizing: border-box; overflow: hidden;
      border: 1px solid #107c41; border-top: 0; background: #efefef;
      font: 12px/16px "Noto Sans CJK JP", "Noto Sans", sans-serif; font-feature-settings: "palt";
    }
  `;
  render() {
    return html`<div class="window">
      <title-bar></title-bar><menu-tabs></menu-tabs><ribbon-bar></ribbon-bar>
      <formula-bar></formula-bar><sheet-grid></sheet-grid><sheet-footer></sheet-footer>
    </div>`;
  }
}
